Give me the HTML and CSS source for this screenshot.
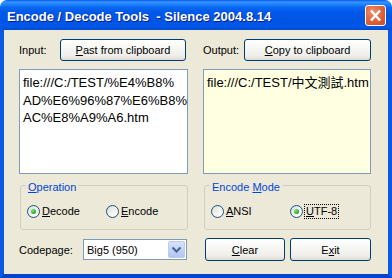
FILE: index.html
```html
<!DOCTYPE html>
<html lang="en">

<head>
  <meta charset="UTF-8">
  <title>Encode / Decode Tools - Silence 2004.8.14</title>
  <link rel="stylesheet" href="styles.css">
</head>

<body>
  <div class="window">
    <div class="titlebar">
      <span class="title">Encode / Decode Tools &nbsp;- Silence 2004.8.14</span>
      <span class="close-btn">
        <svg width="13" height="13" viewBox="0 0 13 13">
          <path d="M2 1.5 L11 11.5 M11 1.5 L2 11.5" stroke="#fff" stroke-width="2.6" fill="none" />
        </svg>
      </span>
    </div>

    <div class="client">
      <!-- input side -->
      <div class="column">
        <div class="head">
          <span class="label">Input:</span>
          <button class="btn head-btn"><u>P</u>ast from clipboard</button>
        </div>
        <div class="editbox">file:///C:/TEST/%E4%B8%<br>AD%E6%96%87%E6%B8%<br>AC%E8%A9%A6.htm</div>
        <fieldset class="group">
          <legend><u>O</u>peration</legend>
          <div class="radios">
            <label class="radio checked"><span class="dot"><span class="pip"></span></span><span class="text"><u>D</u>ecode</span></label>
            <label class="radio"><span class="dot"></span><span class="text"><u>E</u>ncode</span></label>
          </div>
        </fieldset>
        <div class="foot">
          <span class="label code-label">Codepage:</span>
          <div class="combo">
            <span class="combo-value">Big5 (950)</span>
            <span class="combo-btn">
              <svg width="17" height="17" viewBox="0 0 17 17">
                <path d="M4.5 6.5 L8.5 10.5 L12.5 6.5" stroke="#4D6185" stroke-width="2" fill="none" />
              </svg>
            </span>
          </div>
        </div>
      </div>

      <!-- output side -->
      <div class="column">
        <div class="head">
          <span class="label">Output:</span>
          <button class="btn head-btn wide"><u>C</u>opy to clipboard</button>
        </div>
        <div class="editbox output">file:///C:/TEST/中文測試.htm</div>
        <fieldset class="group">
          <legend>Encode <u>M</u>ode</legend>
          <div class="radios">
            <label class="radio"><span class="dot"></span><span class="text"><u>A</u>NSI</span></label>
            <label class="radio checked"><span class="dot"><span class="pip"></span></span><span class="text focus"><u>U</u>TF-8</span></label>
          </div>
        </fieldset>
        <div class="foot buttons">
          <button class="btn foot-btn"><u>C</u>lear</button>
          <button class="btn foot-btn">E<u>x</u>it</button>
        </div>
      </div>
    </div>
  </div>
</body>

</html>
```

FILE: styles.css
```css
html,
body {
  margin: 0;
  padding: 0;
  background: #fff;
}

body {
  font-family: "Liberation Sans", Tahoma, Arial, sans-serif;
  font-size: 11px;
  color: #000;
}

.window {
  width: 392px;
  height: 278px;
  display: flex;
  flex-direction: column;
}

/* title bar */
.titlebar {
  height: 30px;
  display: flex;
  align-items: center;
  justify-content: space-between;
  padding: 0 6px 0 7px;
  box-sizing: border-box;
  border-radius: 7px 7px 0 0;
  background: linear-gradient(#0058EE 0px, #3A93FF 2px, #2286FF 4px, #0A6AF4 7px, #0058E8 12px, #0054E3 22px, #0058EB 26px, #004FDB 29px, #0046CC 30px);
}

.title {
  font-weight: bold;
  font-size: 13px;
  color: #fff;
  white-space: pre;
  padding-top: 3px;
  text-shadow: 1px 1px 0 #0A1E8A;
}

.close-btn {
  width: 21px;
  height: 21px;
  box-sizing: border-box;
  border: 1px solid #fff;
  border-radius: 3px;
  display: flex;
  align-items: center;
  justify-content: center;
  background: radial-gradient(circle at 35% 30%, #F0916C 0%, #E36A43 40%, #CC4A22 100%);
  margin-top: 1px;
}

/* client area */
.client {
  flex: 1;
  background: #ECE9D8;
  border: 4px solid #0A59E4;
  border-top: 0;
  border-bottom-color: #0543CC;
  display: grid;
  grid-template-columns: 169px 168px;
  column-gap: 15px;
  padding: 9px 0 0 15px;
}

.column {
  display: flex;
  flex-direction: column;
}

.head {
  display: flex;
  align-items: center;
  height: 22px;
}

.label {
  width: 41px;
  flex-shrink: 0;
}

.btn {
  font-family: "Liberation Sans", Tahoma, Arial, sans-serif;
  font-size: 11px;
  color: #000;
  border: 1px solid #003C74;
  border-radius: 3px;
  background: linear-gradient(#FFFFFF 0%, #F8F8F5 35%, #EFEEEA 80%, #DEDBD2 100%);
  padding: 0;
  box-sizing: border-box;
}

.head-btn {
  width: 126px;
  height: 22px;
}

.head-btn.wide {
  width: 127px;
}

.editbox {
  margin-top: 8px;
  height: 105px;
  box-sizing: border-box;
  border: 1px solid #7F9DB9;
  background: #fff;
  padding: 4px 3px 0;
  font-family: "Liberation Sans", "Noto Sans CJK TC", sans-serif;
  font-size: 13px;
  line-height: 17.5px;
  white-space: nowrap;
}

.editbox.output {
  background: #FFFFE1;
}

/* group boxes */
.group {
  margin: 3px 0 0 1px;
  padding: 11px 0 11px 6px;
  border: 1px solid #D0D0BF;
  border-radius: 3px;
  min-width: 0;
}

.group legend {
  color: #0046D5;
  padding: 4px 2px 0;
  margin-left: -1px;
  line-height: 13px;
}

.radios {
  display: flex;
  align-items: center;
  height: 13px;
}

.radio {
  display: flex;
  align-items: center;
  width: 79px;
}

.radio:last-child {
  width: auto;
}

.dot {
  width: 13px;
  height: 13px;
  box-sizing: border-box;
  border: 1px solid #1C5180;
  border-radius: 50%;
  background: linear-gradient(135deg, #DCDCD7 0%, #F4F4F0 55%, #FFFFFF 100%);
  display: flex;
  align-items: center;
  justify-content: center;
  flex-shrink: 0;
}

.pip {
  width: 5px;
  height: 5px;
  border-radius: 50%;
  background: radial-gradient(circle at 35% 35%, #7FE37A 0%, #2FB12B 60%, #1E8C1B 100%);
}

.text {
  margin-left: 2px;
  line-height: 13px;
}

.text.focus {
  outline: 1px dotted #000;
  padding: 0 1px;
}

/* bottom row */
.foot {
  display: flex;
  align-items: center;
  margin-top: 8px;
  height: 23px;
}

.code-label {
  width: 64px;
}

.combo {
  width: 104px;
  height: 21px;
  box-sizing: border-box;
  border: 1px solid #7F9DB9;
  background: #fff;
  display: flex;
  align-items: center;
  justify-content: space-between;
  padding: 1px;
}

.combo-value {
  padding-left: 2px;
}

.combo-btn {
  width: 17px;
  height: 17px;
  box-sizing: border-box;
  border: 1px solid #B9CBF3;
  border-radius: 2px;
  background: linear-gradient(#D6E2FC 0%, #C3D4FA 50%, #B1C6F4 100%);
  display: flex;
}

.combo-btn svg {
  margin: -1px;
}

.buttons {
  padding-left: 2px;
  gap: 5px;
}

.foot-btn {
  width: 81px;
  height: 23px;
}

.foot-btn + .foot-btn {
  width: 82px;
}
```
